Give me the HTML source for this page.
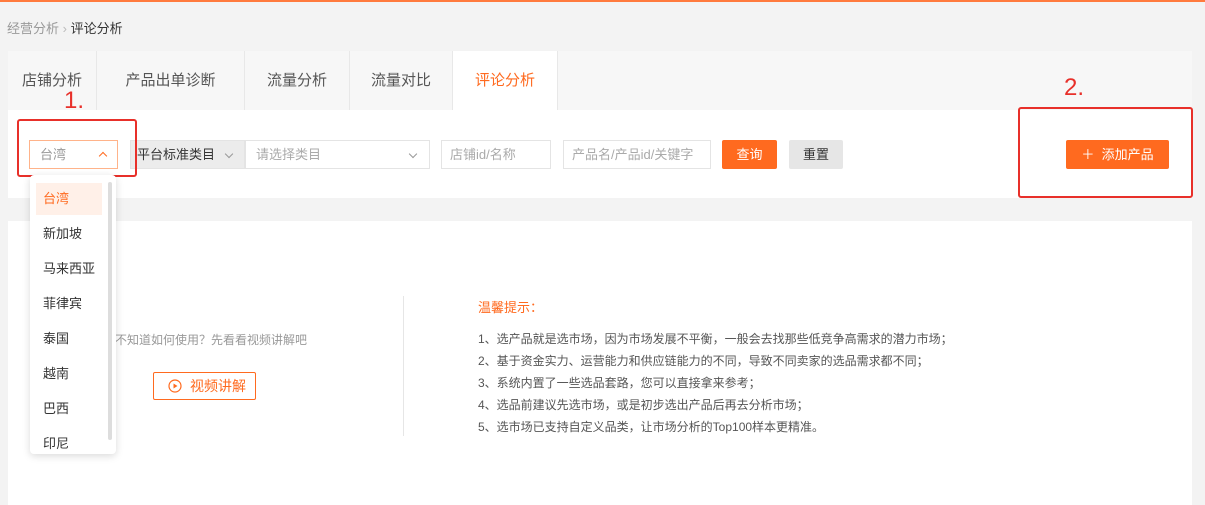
<!DOCTYPE html>
<html><head><meta charset="utf-8"><style>
*{margin:0;padding:0;box-sizing:border-box}
body{width:1205px;height:505px;background:#f3f3f3;font-family:"Liberation Sans","Noto Sans CJK SC",sans-serif;position:relative;overflow:hidden;font-size:13px;color:#333}
.a{position:absolute}
.tab{position:absolute;top:51px;height:59px;line-height:59px;text-align:center;font-size:15px;color:#555;background:#f7f7f7;border-right:1px solid #e8e8e8}
.inp{position:absolute;top:140px;height:29px;border:1px solid #e4e4e4;background:#fff;color:#aaa;font-size:13px;line-height:27px;padding-left:10px}
.chev{position:absolute;width:6px;height:6px;border-right:1px solid #999;border-bottom:1px solid #999;transform:rotate(45deg)}
.it{position:absolute;left:36px;width:66px;height:32px;line-height:32px;padding-left:7px;font-size:13px;color:#333}
.tip{position:absolute;left:478px;font-size:12px;color:#555;white-space:nowrap}
</style></head><body>
<div class="a" style="left:0;top:0;width:1205px;height:2px;background:#ff7a3d"></div>
<div class="a" style="left:7px;top:18px;font-size:13px;color:#999">经营分析 <span style="color:#bbb">›</span> <span style="color:#333">评论分析</span></div>
<div class="a" style="left:8px;top:51px;width:1184px;height:59px;background:#f7f7f7"></div>
<div class="tab" style="left:8px;width:89px">店铺分析</div>
<div class="tab" style="left:97px;width:148px">产品出单诊断</div>
<div class="tab" style="left:245px;width:105px">流量分析</div>
<div class="tab" style="left:350px;width:103px">流量对比</div>
<div class="tab" style="left:453px;width:105px;background:#fff;color:#ff6a1f">评论分析</div>
<div class="a" style="left:8px;top:110px;width:1184px;height:88px;background:#fff"></div>
<div class="inp" style="left:29px;width:89px;border-color:#ffb38a;color:#999">台湾</div>
<div class="chev" style="left:100px;top:153px;transform:rotate(-135deg);border-color:#ff6a1f"></div>
<div class="inp" style="left:130px;width:115px;background:#ececec;color:#333;padding-left:6px">平台标准类目</div>
<div class="chev" style="left:226px;top:151px"></div>
<div class="inp" style="left:245px;width:185px">请选择类目</div>
<div class="chev" style="left:410px;top:151px"></div>
<div class="inp" style="left:441px;width:110px;padding-left:8px">店铺id/名称</div>
<div class="inp" style="left:563px;width:148px;padding-left:8px">产品名/产品id/关键字</div>
<div class="a" style="left:722px;top:140px;width:55px;height:29px;background:#ff6a1f;color:#fff;border-radius:2px;text-align:center;line-height:29px">查询</div>
<div class="a" style="left:789px;top:140px;width:54px;height:29px;background:#e6e6e6;color:#333;border-radius:2px;text-align:center;line-height:29px">重置</div>
<div class="a" style="left:1066px;top:140px;width:103px;height:29px;background:#ff6a1f;color:#fff;border-radius:2px;text-align:center;line-height:29px">＋&nbsp; 添加产品</div>
<div class="a" style="left:17px;top:119px;width:120px;height:58px;border:2px solid #e8302a;border-radius:3px"></div>
<div class="a" style="left:1018px;top:107px;width:175px;height:91px;border:2px solid #e8302a;border-radius:3px"></div>
<div class="a" style="left:64px;top:87px;font-size:24px;color:#e8302a">1.</div>
<div class="a" style="left:1064px;top:74px;font-size:24px;color:#e8302a">2.</div>
<div class="a" style="left:8px;top:221px;width:1184px;height:284px;background:#fff"></div>
<div class="a" style="left:403px;top:296px;width:1px;height:140px;background:#e6e6e6"></div>
<div class="a" style="left:115px;top:331px;font-size:12px;color:#999">不知道如何使用？先看看视频讲解吧</div>
<div class="a" style="left:153px;top:372px;width:103px;height:28px;border:1px solid #ff6a1f;border-radius:2px;color:#ff6a1f;font-size:14px;line-height:26px;padding-left:36px">视频讲解</div>
<svg class="a" style="left:168px;top:379px" width="14" height="14" viewBox="0 0 14 14"><circle cx="7" cy="7" r="6" fill="none" stroke="#ff6a1f" stroke-width="1.2"/><path d="M5.5 4.5 L9.5 7 L5.5 9.5Z" fill="#ff6a1f"/></svg>
<div class="a" style="left:478px;top:297px;font-size:13px;color:#ff6a1f">温馨提示：</div>
<div class="tip" style="top:330px">1、选产品就是选市场，因为市场发展不平衡，一般会去找那些低竞争高需求的潜力市场；</div>
<div class="tip" style="top:352px">2、基于资金实力、运营能力和供应链能力的不同，导致不同卖家的选品需求都不同；</div>
<div class="tip" style="top:374px">3、系统内置了一些选品套路，您可以直接拿来参考；</div>
<div class="tip" style="top:396px">4、选品前建议先选市场，或是初步选出产品后再去分析市场；</div>
<div class="tip" style="top:418px">5、选市场已支持自定义品类，让市场分析的Top100样本更精准。</div>
<div class="a" style="left:30px;top:175px;width:86px;height:279px;background:#fff;border-radius:4px;box-shadow:0 2px 8px rgba(0,0,0,.15)"></div>
<div class="a" style="left:108px;top:182px;width:4px;height:258px;background:#ddd;border-radius:2px"></div>
<div class="it" style="top:183px;background:#fff0e8;color:#ff6a1f">台湾</div>
<div class="it" style="top:218px">新加坡</div>
<div class="it" style="top:253px">马来西亚</div>
<div class="it" style="top:288px">菲律宾</div>
<div class="it" style="top:323px">泰国</div>
<div class="it" style="top:358px">越南</div>
<div class="it" style="top:393px">巴西</div>
<div class="it" style="top:428px">印尼</div>
</body></html>
